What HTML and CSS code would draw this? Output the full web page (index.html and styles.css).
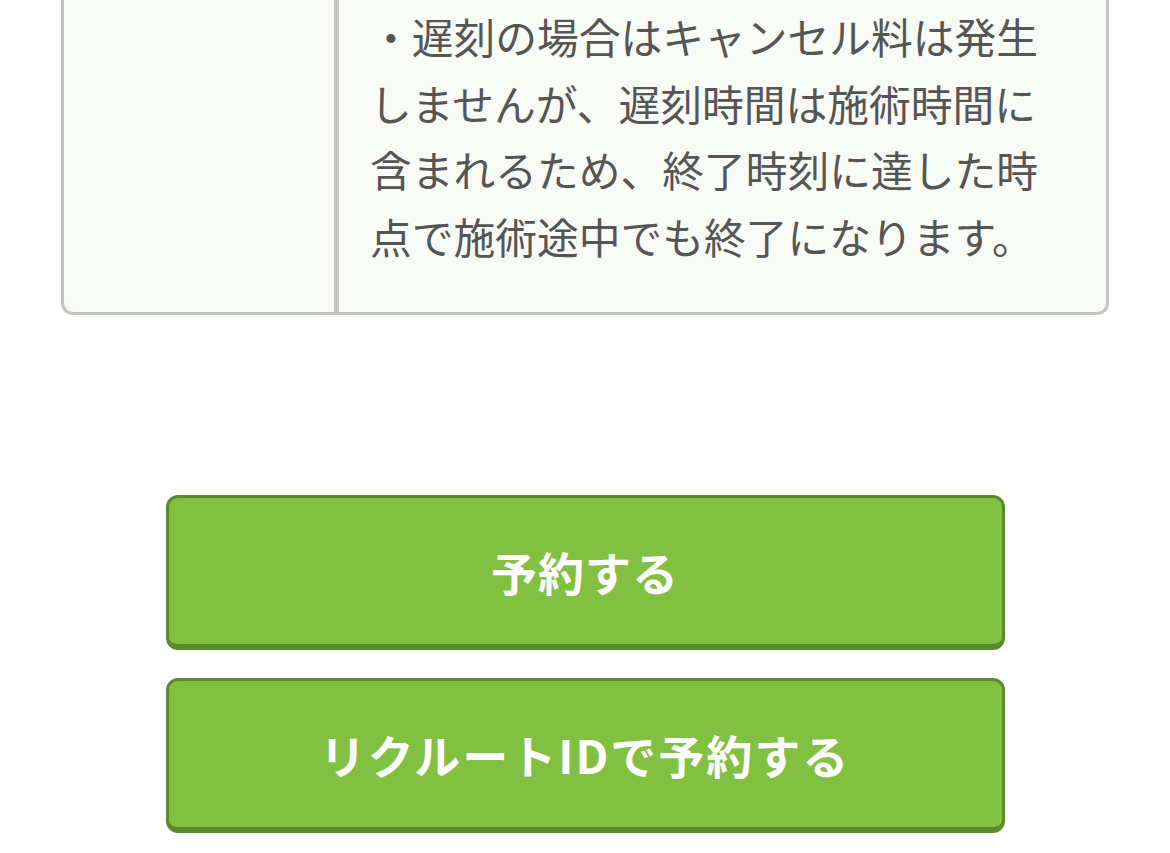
FILE: index.html
```html
<!DOCTYPE html>
<html lang="ja">
<head>
<meta charset="utf-8">
<link rel="stylesheet" href="styles.css">
</head>
<body>
<div class="page">
  <div class="policy">
    <div class="policy-label"></div>
    <div class="policy-body">
      <p class="policy-text">・遅刻の場合はキャンセル料は発生しませんが、遅刻時間は施術時間に含まれるため、終了時刻に達した時点で施術途中でも終了になります。</p>
    </div>
  </div>
  <div class="actions">
    <button class="btn">予約する</button>
    <button class="btn btn-wide">リクルートIDで予約する</button>
  </div>
</div>
</body>
</html>
```

FILE: styles.css
```css
html, body {
  margin: 0;
  padding: 0;
  background: #ffffff;
}
body {
  font-family: "Noto Sans CJK JP", "Noto Sans", sans-serif;
  width: 1170px;
  height: 853px;
  overflow: hidden;
}
.page {
  padding: 0 61px;
}
.policy {
  display: flex;
  background: #f8faf5;
  border: 3px solid #c4c4c4;
  border-top: none;
  border-radius: 0 0 12px 12px;
}
.policy-label {
  width: 270px;
  flex: none;
  border-right: 5px solid #c4c4c4;
}
.policy-body {
  flex: 1;
  padding: 3px 0 43px 31px;
}
.policy-text {
  margin: 0;
  width: 680px;
  font-size: 41.75px;
  line-height: 66.5px;
  color: #555555;
}
.actions {
  display: flex;
  flex-direction: column;
  align-items: center;
  gap: 28px;
  margin-top: 180px;
}
.btn {
  width: 839px;
  height: 155px;
  background: #82c042;
  border: 3px solid #5a8a2e;
  border-bottom-width: 6px;
  border-radius: 12px;
  color: #ffffff;
  font-family: "Noto Sans CJK JP", "Noto Sans", sans-serif;
  font-weight: 700;
  font-size: 46px;
  letter-spacing: 1px;
  padding: 0;
}
.btn-wide {
  letter-spacing: 2px;
}
```
